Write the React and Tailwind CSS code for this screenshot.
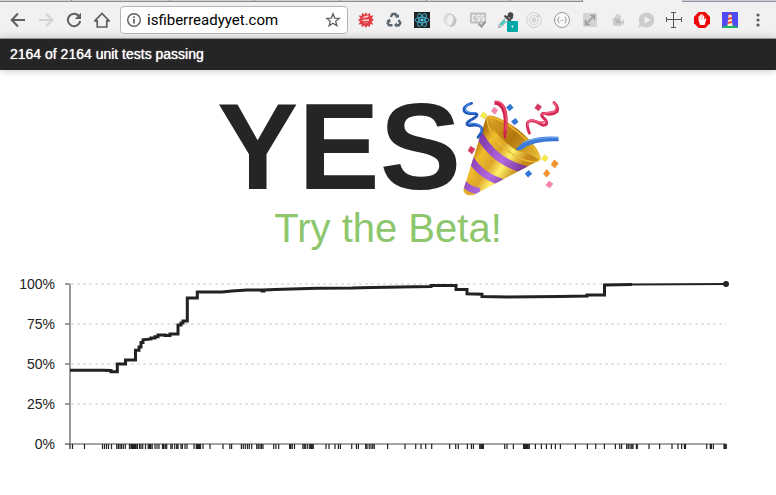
import React from "react";

const TICKS = [
  70, 72.5, 84.5, 102.5, 104.5, 106.5, 108.5, 111.5, 116.7, 118.4, 120, 121.5, 123.3, 125.3, 129.5, 131, 132, 133, 134, 135,
  136, 137.4, 139.5, 141, 142.7, 145.5, 148.2, 149.5, 150.7, 152.2, 155, 157, 159, 162.5, 163.7, 165.3, 166.7, 170.8, 172.3,
  174.7, 176.7, 178, 181, 182.4, 185, 187, 194, 196.3, 197.3, 198.3, 199.3, 200.5, 203, 210, 223, 229.8, 231.6, 241.4, 243.3,
  245.3, 247.5, 249.3, 251.7, 256.7, 258.3, 260, 261.5, 263, 273.7, 276, 278.7, 289.6, 290.7, 292.3, 294.5, 302.8, 304.3, 305.7,
  307.7, 309.8, 311, 312, 313.3, 326, 329, 335, 338.4, 340.4, 351.7, 356.4, 358.4, 365.7, 367, 369.2, 371, 372.7, 374.3, 387.6,
  405, 415.7, 421, 425.7, 431.7, 449.6, 455.7, 458.3, 467.4, 471.4, 473.4, 479.7, 481, 482.2, 483.4, 504.7, 507, 513.4, 523.6,
  524.8, 526, 527, 528, 529.3, 535.4, 541.4, 546.4, 551.4, 555.4, 560.4, 575.4, 587.4, 595.7, 604.4, 615.4, 619.7, 621.6, 626.7,
  628.3, 630, 631.7, 633, 636.4, 637.3, 649, 659.6, 672, 678, 681.6, 684.4, 685.5, 706.7, 710.3, 711.4, 713.4, 724, 725, 726.3,
];

const LEVELS = [
  ["100%", 14],
  ["75%", 54],
  ["50%", 94],
  ["25%", 134],
  ["0%", 174],
];

const S = { width: 16, height: 16, viewBox: "0 0 16 16", fill: "none" };

const extensions = [
  ["Burst", <svg {...S}><path d="M8 0l1.4 2.7L12 .8l.3 3 3.2-.4-1.6 2.7L16 8l-2.4 1.6 1.5 2.8-3-.1-.4 3L9.500 13.500 8 16l-1.700-2.500L3.800 15.300l-.3-3-3 .2 1.600-2.800L0 8l2.300-1.700L.7 3.500l3 .2.5-2.900 2.500 1.900z" fill="#df3f43" /><path d="M5.500 5.500l5-1.500M4.500 8.500l6.500-.5" stroke="#fbd3d2" strokeWidth="1.400" /><path d="M4 6.500l2.500-2.500M6 11l4-.5" stroke="#f0898a" /></svg>],
  ["Recycle", <svg {...S}><path d="M4.800 5L6.500 2h3L11 4.500" stroke="#5b6670" strokeWidth="2.500" /><path d="M9 5.500l3.800.3.400-3.600z" fill="#5b6670" /><path d="M12.700 8l1.600 3-1.300 2.300H10.500" stroke="#5b6670" strokeWidth="2.400" /><path d="M10.900 10.300v5.500L8 13.100z" fill="#5b6670" /><path d="M6.500 13.300H3L1.700 11 3 8.700" stroke="#5b6670" strokeWidth="2.400" /><path d="M.3 8.500L4 6.700l1 3.700z" fill="#5b6670" /></svg>],
  ["React", <svg {...S}><path d="M0 0h16v16H0z" fill="#222" /><g stroke="#43b9d8" strokeWidth=".9"><ellipse cx="8" cy="8" rx="7" ry="2.700" /><ellipse cx="8" cy="8" rx="7" ry="2.700" transform="rotate(60 8 8)" /><ellipse cx="8" cy="8" rx="7" ry="2.700" transform="rotate(120 8 8)" /></g><circle cx="8" cy="8" r="1.500" fill="#61dafb" /></svg>],
  ["Swirl", <svg {...S}><path d="M9 1C3 0 0 6 2 10s6 5 8 4C5 13 4 10 5 7s2-4 4-6z" fill="#dcdcdc" /><path d="M7 15c6 1 9-5 7-9S8 1 6 2c5 1 6 4 5 7s-2 4-4 6z" fill="#c6c6c6" /></svg>],
  ["CSS", <svg {...S}><path d="M.5 1h15v10H.5z" fill="#c9c9c9" stroke="#bcbcbc" /><g stroke="#f5f5f5" strokeWidth="1.200"><path d="M5 3.500H2.500v5H5M9.500 3.500H7V6h2.500v2.500H7M14 3.500h-2.500V6H14v2.500h-2.500" /></g><path d="M8.500 11.500l3 3 4-5" stroke="#9d9d9d" strokeWidth="2.300" /></svg>],
  ["Picker", <svg {...S} className="overflow-visible"><path d="M7.500 6L1.200 12.500.5 15.500l2.500-.7 6.500-6.500" fill="#d9f5f5" stroke="#999" /><path d="M7 8.500L2.500 13" stroke="#2fcaca" strokeWidth="2" /><path d="M6.500 3.500l6 6M9 5.500L11.500 3l2.500 2.500L11.500 8" stroke="#484848" strokeWidth="2" /><circle cx="12.500" cy="3" r="2.800" fill="#444" /><rect x="9" y="9" width="11" height="11" rx="1" fill="#00aaa8" /><path d="M13.500 14h2l-1 1.500z" fill="#fff" stroke="#fff" strokeWidth=".5" /></svg>],
  ["Orbit", <svg {...S} stroke="#d2d2d2"><circle cx="8" cy="8" r="7.400" /><circle cx="8" cy="8" r="4.500" /><circle cx="8" cy="8" r="2" fill="#d2d2d2" /><circle cx="12" cy="4" r="1" fill="#c6c6c6" /></svg>],
  ["JSON", <svg {...S} stroke="#999"><circle cx="8" cy="8" r="7.500" fill="#fafafa" /><path d="M5.500 5Q4 5 4.300 6.500T3.300 8q1.300 0 1 1.500T5.500 11M10.500 5q1.500 0 1.200 1.500T12.700 8q-1.300 0-1 1.500T10.500 11" /><path d="M6.500 8.500h3" strokeDasharray="1 1" /></svg>],
  ["Resize", <svg {...S}><rect x="1" y="1" width="14" height="14" rx="1" fill="#d3d3d3" /><path d="M4.500 11.500l7-7M8 3.500h4.500V8M3.500 8v4.500H8" stroke="#9d9d9d" strokeWidth="1.600" /></svg>],
  ["Snail", <svg {...S}><circle cx="8" cy="5" r="3" fill="#d3d3d3" /><path d="M3 6h8v4l3-3v6l-3-1v2H5q-3-1-2-8z" fill="#cdcdcd" /><path d="M5 8h4M6 10h5" stroke="#b3b3b3" strokeWidth="1.500" /></svg>],
  ["Play", <svg {...S}><path d="M8.500.5a7.500 7.500 0 11-4 13.700L.5 15.500l1.200-4A7.500 7.500 0 018.500.5z" fill="#ccc" /><path d="M6.500 4.500l6 3.600-6 3.600z" fill="#f2f2f2" /></svg>],
  ["Ruler", <svg {...S} stroke="#555" strokeWidth="1"><path d="M7.500 .5v15M.5 7.500h15M5 .5h5M5 15.500h5M.5 5v5M15.500 5v5" /></svg>],
  ["Blocker", <svg {...S}><path d="M4.700 0h6.600L16 4.700v6.600L11.300 16H4.700L0 11.300V4.700z" fill="#ed0707" /><path d="M4.500 8V4.500q1-1 1.300 0V3q1-1 1.500 0v-.5q1-.8 1.500 0V4q1-1 1.500 0v4l1-1.500q1.300-.5 1 .7L10.500 13H6z" fill="#fff" /><path d="M5.800 4v4M7.300 3v5M8.800 3v5" stroke="#f58d8d" strokeWidth=".5" /></svg>],
  ["Lighthouse", <svg {...S}><path d="M0 0h16v16H0z" fill="#504bf5" /><path d="M0 16v-1q8-4 16 0v1z" fill="#19b46b" /><path d="M6.500 3h3l1 11h-5z" fill="#fff1cf" /><path d="M6 6l4-1v2l-4 1zM6 10l4-1v2l-4.500 1zM6 3q2-3 4 0z" fill="#f1452e" /></svg>],
  ["Menu", <svg {...S}><g fill="#5a5a5a"><circle cx="8" cy="3" r="1.600" /><circle cx="8" cy="8" r="1.600" /><circle cx="8" cy="13" r="1.600" /></g></svg>],
];

const navigation = [
  ["Back", <svg {...S} stroke="#5f5f5f" strokeWidth="2"><path d="M15 8H2M8 1.500L1.700 8 8 14.500" /></svg>],
  ["Forward", <svg {...S} stroke="#d2d2d2" strokeWidth="2"><path d="M1 8h13M8 1.500L14.300 8 8 14.500" /></svg>],
  ["Reload", <svg {...S} stroke="#5f5f5f" strokeWidth="2"><path d="M13.200 4.500A6.200 6.200 0 1014.200 9" /><path d="M15 .8V7H8.800z" fill="#5f5f5f" stroke="none" /></svg>],
  ["Home", <svg {...S} stroke="#5f5f5f" strokeWidth="1.700"><path d="M.8 8.800L8 1.500l7.200 7.300h-2.400V15H3.200V8.800z" /></svg>],
];

function IconButton({ label, children }) {
  return (
    <button aria-label={label} className="flex h-7 w-7 shrink-0 items-center justify-center">
      {children}
    </button>
  );
}

function BrowserBar() {
  return (
    <div className="border-b border-[#a3a8a8] bg-[#f1f1f1]">
      <div className="flex h-[2px]">
        <div className="flex flex-[583] border-b border-[#8d8d8d] bg-[#d0d2d3]">
          {[72, 98, 85, 86, 86, 84, 72].map((w, i) => (
            <span key={i} className="border-r border-[#8d8d8d]" style={{ flexGrow: w }} />
          ))}
        </div>
        <div className="flex-[99]" />
        <div className="flex-[94] border-b border-[#8d949d] bg-[#c8ccd4]" />
      </div>
      <div className="flex h-9 items-center px-1">
        {navigation.map(([label, icon]) => (
          <IconButton key={label} label={label}>{icon}</IconButton>
        ))}
        <div className="mx-1 flex h-7 min-w-0 flex-1 items-center rounded border border-[#b4b4b4] bg-white pl-[5px] pr-1">
          <svg {...S} className="shrink-0" stroke="#5f5f5f">
            <circle cx="8" cy="8" r="6.300" strokeWidth="1.400" />
            <path d="M8 7v4.500M8 4.300v1.600" strokeWidth="1.700" />
          </svg>
          <input
            aria-label="Address"
            defaultValue="isfiberreadyyet.com"
            className="ml-[5px] min-w-0 flex-1 bg-transparent font-['Roboto',sans-serif] text-[15px] text-black outline-none"
          />
          <button aria-label="Bookmark" className="shrink-0 px-[2px]">
            <svg {...S} stroke="#5f5f5f" strokeWidth="1.300">
              <path d="M8 1.800l1.700 4.300 4.600.3-3.600 2.900 1.200 4.500L8 11.300l-3.900 2.500 1.200-4.500-3.600-2.900 4.600-.3z" />
            </svg>
          </button>
        </div>
        {extensions.map(([label, icon]) => (
          <IconButton key={label} label={label}>{icon}</IconButton>
        ))}
      </div>
    </div>
  );
}

function PartyPopper() {
  return (
    <svg className="size-[98px] shrink-0 overflow-visible" viewBox="33 27 294 294" role="img" aria-label="Party popper">
      <defs>
        <linearGradient id="gold" x1="65" y1="180" x2="190" y2="265" gradientUnits="userSpaceOnUse">
          <stop offset="0" stopColor="#b87912" />
          <stop offset=".22" stopColor="#f0bd2c" />
          <stop offset=".48" stopColor="#dda52a" />
          <stop offset=".7" stopColor="#fff06a" />
          <stop offset="1" stopColor="#c7881b" />
        </linearGradient>
        <linearGradient id="mouth" x1="120" y1="80" x2="260" y2="210" gradientUnits="userSpaceOnUse">
          <stop offset="0" stopColor="#e0a524" />
          <stop offset=".5" stopColor="#b3760f" />
          <stop offset="1" stopColor="#e7bd35" />
        </linearGradient>
        <linearGradient id="purple" x1="70" y1="170" x2="210" y2="270" gradientUnits="userSpaceOnUse">
          <stop offset="0" stopColor="#7c36a8" />
          <stop offset=".55" stopColor="#b469df" />
          <stop offset="1" stopColor="#70308e" />
        </linearGradient>
        <linearGradient id="blue" x1="0" y1="0" x2="1" y2="1">
          <stop offset="0" stopColor="#4f91e8" />
          <stop offset="1" stopColor="#285fc3" />
        </linearGradient>
        <clipPath id="cone">
          <path d="M109 83Q94 130 40 303Q43 322 71 318L268 214Q250 195 200 185Q133 140 109 83z" />
        </clipPath>
      </defs>
      <path d="M109 83Q119 75 145 86Q218 119 260 179Q281 213 260 217Q215 224 157 171Q112 130 109 83z" fill="url(#mouth)" />
      <path d="M109 83Q94 130 40 303Q43 322 71 318L268 214Q250 195 200 185Q133 140 109 83z" fill="url(#gold)" />
      <g clipPath="url(#cone)" fill="none" stroke="url(#purple)">
        <path d="M89 138Q132 220 236 245" strokeWidth="23" />
        <path d="M60 207Q94 265 170 284" strokeWidth="22" />
        <path d="M37 278Q55 303 90 307" strokeWidth="20" />
      </g>
      <path d="M111 84Q112 130 157 171Q215 224 260 217Q274 214 268 200" fill="none" stroke="#e8bd35" strokeWidth="4" />
      <path d="M119 86Q145 84 194 122Q238 155 260 191" fill="none" stroke="#f1bd2e" strokeWidth="4" />
      <path d="M134 37Q151 32 164 50Q180 77 167 151Q163 153 160 136Q165 83 154 61Q146 46 133 47z" fill="#ce234c" />
      <path d="M134 37Q155 35 164 60Q172 86 167 125" fill="none" stroke="#ed4e70" strokeWidth="5" />
      <path d="M197 181Q231 137 325 143L326 157Q252 154 218 180Q207 187 197 181z" fill="url(#blue)" />
      <path d="M217 161Q252 144 324 146" fill="none" stroke="#72a8f3" strokeWidth="3" />
      <g fill="none" strokeLinecap="round" strokeLinejoin="round">
        <path d="M65 43Q36 52 43 67Q48 76 74 73Q91 76 68 90Q39 105 58 110Q97 103 96 125Q93 133 84 145" stroke="#2159b9" strokeWidth="8" />
        <path d="M59 43Q40 55 50 66Q58 71 75 71M55 103Q100 99 93 130" stroke="#4188eb" strokeWidth="4" />
        <path d="M312 41Q327 55 321 68Q307 80 283 73Q266 75 286 92Q297 107 279 109Q246 88 234 99Q228 106 238 132" stroke="#d52d57" strokeWidth="9" />
        <path d="M312 41Q326 61 309 68Q290 70 278 77M286 97Q274 103 251 94Q230 91 234 111" stroke="#f25c82" strokeWidth="5" />
      </g>
      <g strokeLinejoin="round">
        <path d="M99 69l12 8-8 13-12-8zM283 197l12 9-9 12-12-8z" fill="#f4ec45" stroke="#d5c833" />
        <path d="M181 45l9 11-12 10-9-11zM197 88l8 11-12 9-9-11zM236 244l10 10-12 11-9-11z" fill="#3076d9" stroke="#205fb5" />
        <path d="M132 54l12 9-9 13-11-9zM297 276l12 8-9 13-13-8z" fill="#f487ab" stroke="#dc7097" />
        <path d="M263 44l12 9-9 13-12-9zM62 171l13 9-9 15-12-10z" fill="#d73960" stroke="#bd3154" />
        <path d="M313 212l12 11-10 14-12-10zM290 241l10 12-10 12-10-11z" fill="#f2942c" stroke="#d97f20" />
      </g>
    </svg>
  );
}

function PassingChart() {
  return (
    <svg className="block w-full" viewBox="0 0 776 190" role="img" aria-label="Share of unit tests passing over time">
      <g className="font-['Liberation_Sans',Arial,sans-serif] text-[14px]" fill="#222" textAnchor="end">
        {LEVELS.map(([label, y]) => (
          <text key={label} x="55" y={y + 5}>{label}</text>
        ))}
      </g>
      <g stroke="#ddd" strokeDasharray="3 3">
        {LEVELS.slice(0, 4).map(([label, y]) => (
          <path key={label} d={`M71 ${y}H726`} strokeWidth="1.600" />
        ))}
      </g>
      <g stroke="#888" strokeWidth="1.700">
        {LEVELS.map(([label, y]) => (
          <path key={label} d={`M65 ${y}h5`} />
        ))}
        <path d="M70 14v160M65 174h661" />
      </g>
      <path d={TICKS.map((x) => `M${x} 174v5`).join("")} stroke="#222" strokeWidth="1.200" />
      <path
        d="M70 100.200H103L111 100.500V101.700H117.300V94H125.500V90H135.500V80.300H139V77H141V72.500H143V69.800L151 69V68H155V66.800H158V65H165V65.500H170V64H178V55H181V53H183V51H187.300V28H197.300V22H222L232 21L247 20L262 20V21H264V20L275 19.600L300 18.700L317 18.200L352 18L372 17.400L415 16.800L431 16.500V15.500H456V19.500H467V23.700L482 24.300V26.500L508 27L560 26.500L587 26V25H604.500V15L632 14.600"
        fill="none" stroke="#222" strokeWidth="3"
      />
      <path d="M630 14.400L726 14" stroke="#222" strokeWidth="2" />
      <circle cx="726" cy="14" r="3" fill="#222" />
    </svg>
  );
}

export default function App() {
  return (
    <div className="min-h-screen bg-white font-['Liberation_Sans',Arial,sans-serif] text-[#222]">
      <BrowserBar />
      <header className="bg-[#252525] px-[10px] py-[6px] text-[14px] leading-[19px] text-white shadow-[0_0_10px_rgba(0,0,0,0.25)] [text-shadow:0_0_1px_#fff]">
        2164 of 2164 unit tests passing
      </header>
      <main>
        <h1 className="flex items-center justify-center pt-[22px] text-[122px] leading-[110px] font-bold text-[#252525]">
          YES
          <PartyPopper />
        </h1>
        <p className="text-center text-[40px] leading-[52px] text-[#8dc66c]">
          <a href="#beta">Try the Beta!</a>
        </p>
        <div className="pt-4">
          <PassingChart />
        </div>
      </main>
    </div>
  );
}
